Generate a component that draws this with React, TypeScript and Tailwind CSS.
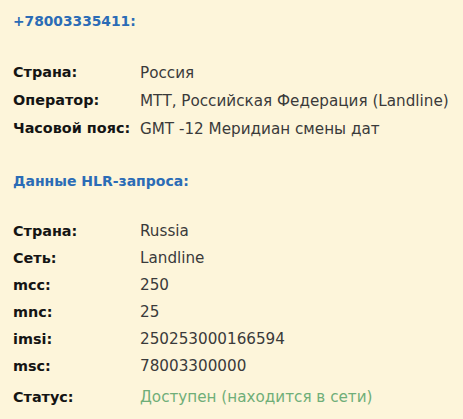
import React from "react";

type Row = { label: string; value: string; tone?: "ok" };

const phoneRows: Row[] = [
  { label: "Страна:", value: "Россия" },
  { label: "Оператор:", value: "МТТ, Российская Федерация (Landline)" },
  { label: "Часовой пояс:", value: "GMT -12 Меридиан смены дат" },
];

const hlrRows: Row[] = [
  { label: "Страна:", value: "Russia" },
  { label: "Сеть:", value: "Landline" },
  { label: "mcc:", value: "250" },
  { label: "mnc:", value: "25" },
  { label: "imsi:", value: "250253000166594" },
  { label: "msc:", value: "78003300000" },
];

function InfoRow({ label, value, tone, tall }: Row & { tall?: boolean }) {
  return (
    <div className={`grid grid-cols-[127px_1fr] items-center ${tall ? "h-[28px]" : "h-[27px]"}`}>
      <span className="font-bold text-[14.4px] text-[#141414]">{label}</span>
      <span className={tone === "ok" ? "text-[#6fae78]" : "text-[#3a3a3a]"}>{value}</span>
    </div>
  );
}

export default function App() {
  return (
    <div
      className="w-[463px] h-[419px] bg-[#fdf5da] px-[13px] pt-[9px] text-[15.2px] overflow-hidden"
      style={{ fontFamily: '"DejaVu Sans", sans-serif' }}
    >
      <h2 className="font-bold text-[13.8px] text-[#2b6cb6] h-[24px] leading-[24px]">+78003335411:</h2>
      <div className="mt-[26px]">
        {phoneRows.map((r) => (
          <InfoRow key={r.label} {...r} tall />
        ))}
      </div>
      <h2 className="font-bold text-[14px] text-[#2b6cb6] mt-[26px] h-[24px] leading-[24px]">
        Данные HLR-запроса:
      </h2>
      <div className="mt-[25px]">
        {hlrRows.map((r) => (
          <InfoRow key={r.label} {...r} />
        ))}
      </div>
      <div className="mt-[4px]">
        <InfoRow label="Статус:" value="Доступен (находится в сети)" tone="ok" />
      </div>
    </div>
  );
}
